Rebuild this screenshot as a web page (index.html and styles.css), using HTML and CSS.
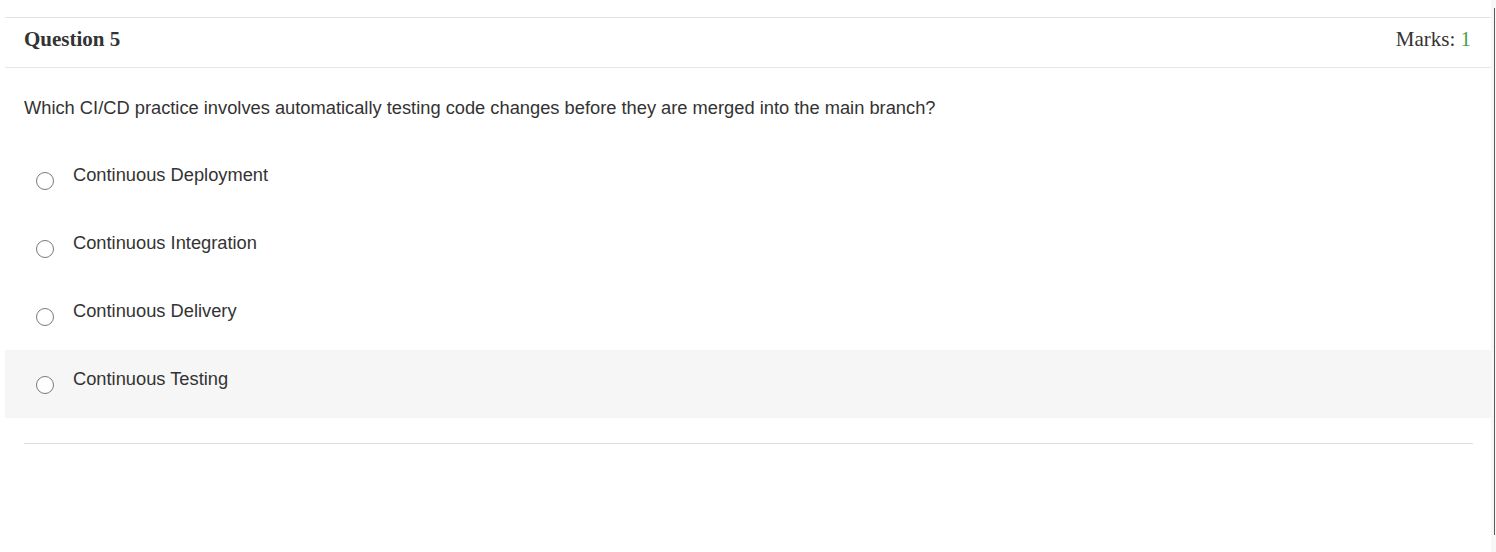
FILE: index.html
```html
<!DOCTYPE html>
<html lang="en">
<head>
<meta charset="utf-8">
<title>Question 5</title>
<link rel="stylesheet" href="styles.css">
</head>
<body>
<div class="page">
  <section class="card">
    <header class="card-head">
      <h2 class="q-title">Question 5</h2>
      <div class="marks">Marks: <span class="marks-val">1</span></div>
    </header>
    <p class="q-text">Which CI/CD practice involves automatically testing code changes before they are merged into the main branch?</p>
    <div class="options">
      <label class="option"><input type="radio" name="q5" class="radio"><span class="opt-text">Continuous Deployment</span></label>
      <label class="option"><input type="radio" name="q5" class="radio"><span class="opt-text">Continuous Integration</span></label>
      <label class="option"><input type="radio" name="q5" class="radio"><span class="opt-text">Continuous Delivery</span></label>
      <label class="option hover"><input type="radio" name="q5" class="radio"><span class="opt-text">Continuous Testing</span></label>
    </div>
    <hr class="sep">
  </section>
</div>
<div class="scrollbar"><div class="thumb"></div></div>
</body>
</html>
```
FILE: styles.css
```css
html, body {
  margin: 0;
  padding: 0;
  background: #ffffff;
}
body {
  font-family: "Liberation Sans", Arial, sans-serif;
  color: #333333;
}
.page {
  padding: 17px 5px 0 5px;
  width: 1486px;
}
.card {
  border-top: 1px solid #e3e3e3;
}
.card-head {
  display: flex;
  justify-content: space-between;
  align-items: flex-start;
  height: 50px;
  box-sizing: border-box;
  padding: 10px 20px 0 19px;
  border-bottom: 1px solid #e6e6e6;
  font-family: "Liberation Serif", "Times New Roman", serif;
  font-size: 21px;
  color: #333333;
}
.q-title {
  margin: 0;
  font-size: 21px;
  font-weight: bold;
  line-height: 23px;
}
.marks {
  line-height: 23px;
}
.marks-val {
  color: #4a9d4a;
}
.q-text {
  margin: 27px 19px 26px 19px;
  font-size: 18.3px;
  line-height: 25px;
}
.options {
  display: flex;
  flex-direction: column;
}
.option {
  display: flex;
  align-items: flex-start;
  height: 68px;
  box-sizing: border-box;
  padding: 16px 0 0 31px;
  font-size: 18.3px;
  line-height: 25px;
  cursor: pointer;
}
.option.hover {
  background: #f6f6f6;
}
.radio {
  appearance: none;
  -webkit-appearance: none;
  margin: 10px 0 0 0;
  width: 18px;
  height: 18px;
  box-sizing: border-box;
  border: 1.5px solid #7a7a7a;
  border-radius: 50%;
  background: #ffffff;
  flex: none;
}
.opt-text {
  margin-left: 19px;
}
.sep {
  margin: 25px 18px 0 19px;
  border: 0;
  border-top: 1px solid #dedede;
  height: 0;
}
.scrollbar {
  position: fixed;
  top: 0;
  right: 0;
  width: 5px;
  height: 552px;
  background: #f7f7f7;
}
.thumb {
  position: absolute;
  top: 8px;
  left: 3px;
  width: 1px;
  height: 527px;
  background: #5a5a5a;
}
```
